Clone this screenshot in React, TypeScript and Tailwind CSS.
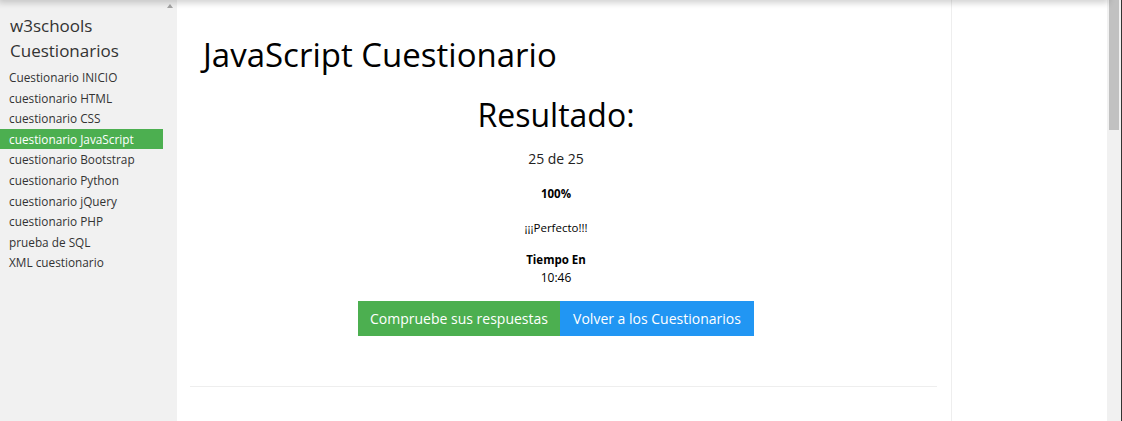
import React from "react";

const links = [
  "Cuestionario INICIO",
  "cuestionario HTML",
  "cuestionario CSS",
  "cuestionario JavaScript",
  "cuestionario Bootstrap",
  "cuestionario Python",
  "cuestionario jQuery",
  "cuestionario PHP",
  "prueba de SQL",
  "XML cuestionario",
];

const font = { fontFamily: '"Segoe UI", "Open Sans", "Noto Sans", sans-serif' };

export default function App() {
  return (
    <div
      className="relative flex h-[421px] w-[1122px] overflow-hidden bg-white text-[#000]"
      style={font}
    >
      {/* shadow of the fixed top bar */}
      <div className="absolute left-0 right-[15px] top-[-6px] z-10 h-[6px] shadow-[0_1px_6px_2px_rgba(0,0,0,0.18)]" />

      {/* sidebar */}
      <aside className="relative flex w-[177px] shrink-0 flex-col bg-[#f1f1f1]">
        <div className="absolute right-[4px] top-[4px] h-0 w-0 border-x-[3px] border-b-[4px] border-x-transparent border-b-[#a3a3a3]" />
        <h4 className="pl-[10px] pt-[13px] text-[17px] leading-[25px] text-[#333]">
          w3schools
          <br />
          Cuestionarios
        </h4>
        <nav className="mt-[4px] flex w-[163px] flex-col">
          {links.map((item, index) => (
            <a
              key={index}
              className={`block h-[20.6px] pl-[9px] text-[11.8px] leading-[20.6px] ${
                item === "cuestionario JavaScript"
                  ? "bg-[#4caf50] text-white"
                  : "text-[#333]"
              }`}
            >
              {item}
            </a>
          ))}
        </nav>
      </aside>

      {/* main */}
      <main className="flex w-[775px] shrink-0 flex-col border-r border-[#eee]">
        <h1 className="pl-[26px] pt-[32px] text-[33px] leading-[46px] text-[#000]">
          JavaScript Cuestionario
        </h1>
        <div className="ml-[13px] flex w-[732px] flex-col items-center text-center">
          <h2 className="mt-[15px] text-[32px] leading-[44px]">Resultado:</h2>
          <p className="mt-[12px] text-[14px] leading-[20px] text-[#222]">25 de 25</p>
          <p className="mt-[17px] text-[11.5px] font-bold leading-[16px]">100%</p>
          <p className="mt-[18px] text-[11.5px] leading-[16px]">¡¡¡Perfecto!!!</p>
          <p className="mt-[16px] text-[11.5px] font-bold leading-[16px]">Tiempo En</p>
          <p className="mt-[1px] text-[12px] leading-[18px]">10:46</p>
          <div className="mt-[14px] flex">
            <button className="h-[35px] w-[202px] bg-[#4caf50] text-[14px] text-white">
              Compruebe sus respuestas
            </button>
            <button className="h-[35px] w-[194px] bg-[#2196f3] text-[14px] text-white">
              Volver a los Cuestionarios
            </button>
          </div>
        </div>
        <hr className="ml-[13px] mt-[50px] w-[747px] border-t border-[#eee]" />
      </main>

      {/* right column */}
      <div className="flex-1 bg-white" />

      {/* page scrollbar */}
      <div className="flex w-[15px] shrink-0 flex-col border-r border-[#333] bg-[#f1f1f1]">
        <div className="ml-[2px] h-[130px] w-[10px] bg-[#c1c1c1]" />
      </div>
    </div>
  );
}
